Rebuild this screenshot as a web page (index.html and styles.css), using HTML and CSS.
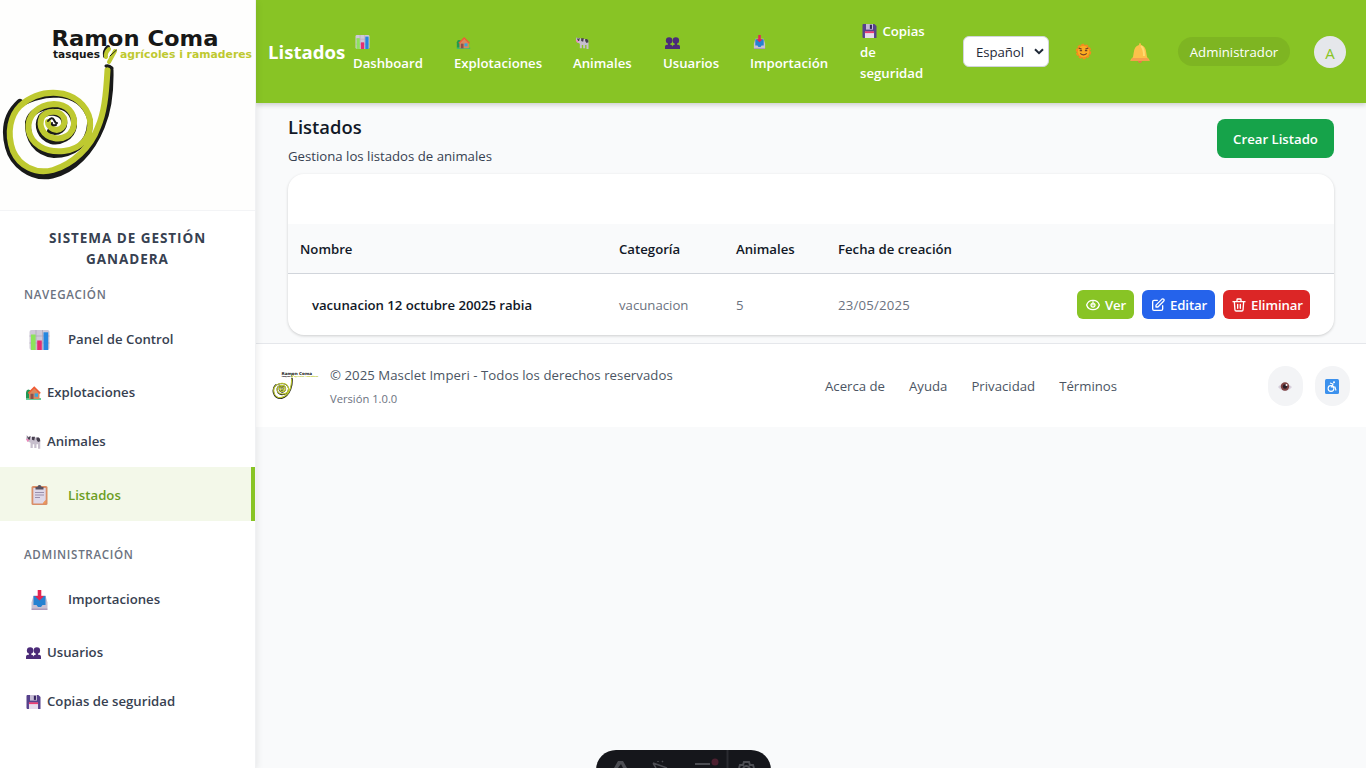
FILE: index.html
```html
<!DOCTYPE html>
<html lang="es">
<head>
<meta charset="utf-8">
<title>Listados</title>
<link rel="stylesheet" href="styles.css">
</head>
<body>
<svg class="defs" width="0" height="0" aria-hidden="true">
  <symbol id="chart" viewBox="0 0 20 20"><rect width="20" height="20" rx="2" fill="#cfc9d8"/><path d="M0 6h20M0 13h20M6.500 0v20M13 0v20" stroke="#aaa2b8" stroke-width=".7"/><rect x="1.500" y="4.500" width="4.600" height="15.500" fill="#8de35b"/><rect x="7.700" y="10.500" width="4.600" height="9.500" fill="#e52d70"/><rect x="14" y="2.300" width="4.700" height="17.700" fill="#2686df"/></symbol>
  <symbol id="house" viewBox="0 0 20 18"><path d="M0 16V8q1-5 5-3l3 2v9z" fill="#219653"/><path d="M0 16h20v2H0z" fill="#38bb75"/><path d="M4 8l7-6 7 6v9H4z" fill="#d9895f"/><path d="M3 9.500L11 1.500l8 8" fill="none" stroke="#f05b35" stroke-width="2"/><rect x="6" y="10" width="4" height="7" fill="#8c504b"/><rect x="11.500" y="9.500" width="4.500" height="4.500" fill="#36a8dc"/></symbol>
  <symbol id="cow" viewBox="0 0 20 18"><path d="M1 0l2 2 3-1 2 2h8q3 0 3 4v11h-3v-6h-2v5h-3v-5H9v5H6v-7L2 8 0 5z" fill="#c7bfcd"/><path d="M1 0l2 3 3-2-1 5H3zm7 2h4l-1 5-3-1zm6 1h3q2 1 2 5l-3 1-2-3z" fill="#463f4e"/><path d="M0 5h3l1 2-2 2z" fill="#ee86ba"/></symbol>
  <symbol id="users" viewBox="0 0 20 16"><g fill="#4b2b78"><circle cx="5.500" cy="4.500" r="4.300"/><circle cx="14.500" cy="4.500" r="4.300"/><path d="M0 16v-3q0-3 5-3t5 3q0-3 5-3t5 3v3z"/><path d="M4 7h3v4H4zM13 7h3v4h-3z"/></g></symbol>
  <symbol id="disk" viewBox="0 0 20 20"><path d="M1 0h16l3 3v17H1L0 19V1z" fill="#56418c"/><path d="M5 0h10v8H5z" fill="#c6bbd4"/><path d="M10.500 1h3v6h-3z" fill="#34245e"/><path d="M3.500 11h13v9h-13z" fill="#e7dced"/><path d="M3.500 10.500h13V13h-13z" fill="#ed3d72"/></symbol>
  <symbol id="inbox" viewBox="0 0 16 20"><path d="M2 5.500h12l2 7V18q0 2-2 2H2q-2 0-2-2v-5.500z" fill="#c8c0d2"/><path d="M2 6h12v9h-3l-1.500 2h-3L5 15H2z" fill="#2581d1"/><path d="M0 18.500h16V20H0z" fill="#ad9bbb"/><path d="M6.200 0h3.600v6h2.700L8 10.500 3.500 6h2.700z" fill="#e62552"/></symbol>
  <symbol id="clip" viewBox="0 0 16 20"><rect y="1" width="16" height="19" rx="1.500" fill="#d98e67"/><path d="M1.800 3h12.400v12l-3 3.500H1.800z" fill="#ded8e8"/><path d="M14.200 15v3.500h-3z" fill="#f39b58"/><path d="M4 4.500V2h2q0-2 2-2t2 2h2v2.500z" fill="#57505f"/><path d="M3.500 7.500h9M3.500 10h9M3.500 12.500h5" stroke="#9a8fac"/></symbol>
</svg>
<div class="app">
  <aside class="sidebar">
    <div class="brand"><svg class="logo" viewBox="0 0 256 200">
      <g id="snail" fill="none" stroke-linecap="round" stroke-linejoin="round">
        <path d="M109.500 70C110 93 107 112 101 126C91 151 73 170 52 174.500C31 179 13 163 9 147C4 128 9 113 20 103" stroke="#191a19" stroke-width="8"/>
        <path d="M15 109C26 99 43 95 57 95C75 96 86 106 90 120" stroke="#191a19" stroke-width="5"/>
        <path d="M90 124C89 144 73 155 54 155C36 153 27 139 28 122C30 112 42 106 55 106C68 106 75 115 74 126C72 138 60 143 51 141C40 137 36 126 41 117C47 110 61 112 64 120C66 129 58 134 50 131" stroke="#191a19" stroke-width="6"/>
        <path d="M107.500 70C106 97 104 113 98 127C91 147 73 164 53 170C35 175 19 165 13 151C6 132 11 115 20 106C30 97 43 92 57 93C74 94 87 105 90 120C92 137 81 149 64 151C45 153 31 144 28.500 130C27 115 38 105 54 104C67 104 75 113 74 124C73 135 63 140 54 138C43 136 38 126 42 117C48 110 60 110 64 118C66 126 60 132 53 129Q48 126 48 122" stroke="#bec930" stroke-width="6"/>
        <path d="M48 121q4-5 6-1t3 3M52 123q-1 3 4 2" stroke="#191a19" stroke-width="2"/>
        <path d="M106 66q3-1 6 2" stroke="#191a19" stroke-width="3"/>
        <path d="M105 56q-1-5 3-9" stroke="#191a19" stroke-width="4"/><path d="M106 57q-1-4 3-8M109 62l6-11" stroke="#bec930" stroke-width="4"/><path d="M110 56l6.500-6" stroke="#191a19"/>
      </g>
      <g id="wordmark" font-family="DejaVu Sans, sans-serif" font-weight="bold"><text x="51.500" y="46" font-size="21.500" textLength="167" lengthAdjust="spacingAndGlyphs" fill="#171817">Ramon Coma</text><text x="53" y="58" font-size="10.500" textLength="47" lengthAdjust="spacingAndGlyphs" fill="#171817">tasques</text><text x="120" y="58" font-size="10.500" textLength="132" lengthAdjust="spacingAndGlyphs" fill="#bec930">agrícoles i ramaderes</text></g>
    </svg></div>
    <h2 class="system">SISTEMA DE GESTIÓN<br>GANADERA</h2>
    <h3 class="section">NAVEGACIÓN</h3>
    <a class="item big"><svg><use href="#chart"/></svg><span>Panel de Control</span></a>
    <a class="item"><svg><use href="#house"/></svg><span>Explotaciones</span></a>
    <a class="item"><svg><use href="#cow"/></svg><span>Animales</span></a>
    <a class="item big active"><svg><use href="#clip"/></svg><span>Listados</span></a>
    <h3 class="section admin">ADMINISTRACIÓN</h3>
    <a class="item big"><svg><use href="#inbox"/></svg><span>Importaciones</span></a>
    <a class="item"><svg><use href="#users"/></svg><span>Usuarios</span></a>
    <a class="item"><svg><use href="#disk"/></svg><span>Copias de seguridad</span></a>
  </aside>
  <div class="content">
    <header class="topbar">
      <h1 class="title">Listados</h1>
      <nav class="topnav">
        <a><svg><use href="#chart"/></svg><br>Dashboard</a>
        <a><svg class="low"><use href="#house"/></svg><br>Explotaciones</a>
        <a><svg class="low"><use href="#cow"/></svg><br>Animales</a>
        <a><svg class="low"><use href="#users"/></svg><br>Usuarios</a>
        <a><svg><use href="#inbox"/></svg><br>Importación</a>
        <a><svg class="disk"><use href="#disk"/></svg> Copias<br>de<br>seguridad</a>
      </nav>
      <div class="language"><span>Español</span><svg viewBox="0 0 10 7"><path d="M1 1.200l4 4 4-4" fill="none" stroke="#1f2937" stroke-width="2"/></svg></div>
      <svg class="sun" viewBox="0 0 18 18"><circle cx="9" cy="9" r="7.200" fill="#f48b20" stroke="#f48b20" stroke-width="2" stroke-dasharray="3 1.500"/><circle cx="9" cy="9" r="6" fill="#faad21"/><path d="M4 5.500l3 1M14 5.500l-3 1M5 8h2.500M10.500 8H13M5.500 11q3.500 3 7 0" fill="none" stroke="#754325" stroke-width="1.300"/></svg>
      <svg class="bell" viewBox="0 0 20 20"><circle cx="10" cy="18" r="2" fill="#e6784d"/><path d="M9 2q0-2 1-2t1 2q5 1 5.500 9l.5 3 2.500 3q.5 1-1 1h-17q-1.500 0-1-1L3 14l.5-3Q4 3 9 2z" fill="#fcc14b"/><path d="M2 15h16l1.500 3H.5z" fill="#f6a04c"/><path d="M11 3q3 2 3 10" fill="none" stroke="#ffdc70" stroke-width="2"/></svg>
      <span class="role">Administrador</span><span class="avatar">A</span>
    </header>
    <main class="main">
      <div class="heading"><div><h2>Listados</h2><p>Gestiona los listados de animales</p></div><button class="create">Crear Listado</button></div>
      <section class="card">
        <div class="row head"><span>Nombre</span><span>Categoría</span><span>Animales</span><span class="date">Fecha de creación</span></div>
        <div class="row entry"><strong>vacunacion 12 octubre 20025 rabia</strong><span>vacunacion</span><span>5</span><span class="day">23/05/2025</span>
          <div class="actions">
            <button class="view"><svg viewBox="0 0 24 24"><path d="M2.500 12C3.700 7.900 7.500 5 12 5s8.300 2.900 9.500 7c-1.200 4.100-5 7-9.500 7s-8.300-2.900-9.500-7z"/><path d="M10 10a3 3 0 1 0 4 0M12 7v5"/></svg><span>Ver</span></button>
            <button class="edit"><svg viewBox="0 0 24 24"><path d="M11 5H6a2 2 0 00-2 2v11a2 2 0 002 2h11a2 2 0 002-2v-5m-1.400-9.400a2 2 0 112.800 2.800L11.800 15H9v-2.800l8.600-8.600z"/></svg><span>Editar</span></button>
            <button class="delete"><svg viewBox="0 0 24 24"><path d="M19 7l-.9 12.100A2 2 0 0116.100 21H7.900a2 2 0 01-2-1.900L5 7m5 4v6m4-6v6m1-10V4a1 1 0 00-1-1h-4a1 1 0 00-1 1v3M3 7h18"/></svg><span>Eliminar</span></button>
          </div>
        </div>
      </section>
    </main>
    <footer class="footer">
      <svg class="footlogo" viewBox="0 0 256 200"><use href="#snail"/><use href="#wordmark"/></svg>
      <div class="copyright"><p>© 2025 Masclet Imperi - Todos los derechos reservados</p><small>Versión 1.0.0</small></div>
      <nav class="footlinks"><a>Acerca de</a><a>Ayuda</a><a>Privacidad</a><a>Términos</a></nav>
      <div class="tools"><span><svg width="14" height="12" viewBox="0 0 14 12"><path d="M0 6Q6-1 14 6q-7 8-14 0z" fill="#d6cedb"/><circle cx="7" cy="5.500" r="4.200" fill="#804443"/><circle cx="7" cy="5.500" r="2.200" fill="#291e28"/><circle cx="8.500" cy="4" r="1" fill="#fff"/></svg></span><span><svg width="14" height="15" viewBox="0 0 14 15"><rect width="14" height="15" rx="1.500" fill="#3c91ed"/><g fill="none" stroke="#fff" stroke-width="1.100"><circle cx="6" cy="9.500" r="2.900"/><path d="M5 4l3 1-1.500 3H10l1 3.500"/></g><circle cx="9" cy="3.300" r="1" fill="#fff"/></svg></span></div>
    </footer>
  </div>
</div>
<div class="devbar"><svg width="175" height="18" viewBox="0 0 175 18" fill="none" stroke="#4c4d53" stroke-width="2"><path d="M18 18l4-7h5l4 7h-4l-2-4-3 4z" fill="#4c4d53" stroke="none"/><path d="M57 13l14 5M57 13l3 5M62 12l0-1M66 12l1-1" stroke-width="1.500"/><path d="M99 14h15"/><circle cx="119" cy="12" r="3.500" fill="#4c2030" stroke="none"/><path d="M131.500 0v18" stroke="#2a2b31"/><path d="M143 18l1-3 3 0 1-3h5l1 3 3 0 1 3M147 18q3-4 7 0"/></svg></div>
</body>
</html>
```
FILE: styles.css
```css
* { box-sizing: border-box; }
body { margin: 0; background: #f9fafb; color: #111827; font: 13.2px/21px "Open Sans", "Noto Sans", sans-serif; overflow: hidden; }
h1, h2, h3, p { margin: 0; }
button { border: 0; font: inherit; color: #fff; font-weight: 600; }
.defs { position: absolute; }
.app { display: flex; height: 768px; }
.sidebar { width: 256px; flex: none; background: #fff; border-right: 1px solid #f0f1f3; box-shadow: 0 2px 8px rgba(0,0,0,.1); z-index: 2; position: relative; }
.brand { height: 211px; border-bottom: 1px solid #f3f4f6; background: #fefefd; }
.logo { display: block; width: 256px; height: 200px; }
.system { padding-top: 17px; height: 74px; text-align: center; color: #374151; font-size: 13.5px; line-height: 21px; letter-spacing: .95px; }
.section { margin-left: 24px; height: 26px; line-height: 19px; font-size: 11.6px; font-weight: 600; letter-spacing: .68px; color: #6b7280; }
.admin { margin-top: 24px; }
.item { display: flex; align-items: center; height: 49px; padding-left: 26px; color: #374151; font-weight: 600; }
.item svg { width: 15px; height: 14px; margin-right: 6px; }
.item.big { height: 57px; padding-left: 29px; }
.item.big svg { width: 21px; height: 20px; margin-right: 18px; }
.item.active { height: 54px; margin-top: 1px; padding-top: 2px; background: #f3f8e9; color: #6c9e1f; border-right: 4px solid #88c425; }
.content { width: 1110px; }
.topbar { height: 103px; background: #88c425; display: flex; align-items: center; padding-left: 12px; color: #fff; box-shadow: 0 2px 5px rgba(0,0,0,.18); position: relative; }
.title { width: 85px; font-size: 18.6px; line-height: 28px; padding-top: 1px; white-space: nowrap; }
.topnav { display: grid; grid-template-columns: 101px 119px 90px 87px 110px 103px; align-items: center; font-weight: 600; white-space: nowrap; padding-top: 2px; }
.topnav svg { width: 15px; height: 14px; margin-left: 2px; vertical-align: -2px; }
.topnav .low { height: 12px; }
.topnav .disk { margin-right: 2px; }
.language { width: 86px; height: 31px; border: 1px solid #d1d5db; border-radius: 6px; background: #fff; color: #1f2937; padding: 0 4px 0 12px; display: flex; align-items: center; justify-content: space-between; }
.language span { padding-top: 2px; letter-spacing: -.05px; }
.language svg { width: 10px; height: 7px; }
.sun { width: 17px; height: 17px; margin-left: 26px; }
.bell { width: 20px; height: 20px; margin: 2px 28px 0 38px; }
.role { width: 112px; height: 29px; border-radius: 15px; background: #7eb522; text-align: center; line-height: 31px; margin-right: 24px; }
.avatar { width: 32px; height: 32px; border-radius: 50%; background: #e5e7eb; color: #88c425; text-align: center; line-height: 34px; font-size: 15px; }
.main { height: 240px; padding: 9px 32px 0; }
.heading { display: flex; justify-content: space-between; height: 62px; }
.heading h2 { font-size: 18.4px; font-weight: 600; line-height: 30px; }
.heading p { color: #374151; padding-top: 4px; }
.create { width: 117px; height: 39px; margin-top: 7px; border-radius: 8px; background: #16a34a; padding: 2px 0 0; }
.card { height: 161px; border-radius: 16px; background: #fff; padding-top: 50px; box-shadow: 0 1px 3px rgba(0,0,0,.18); }
.row { display: grid; grid-template-columns: 319px 117px 102px 130px 1fr; align-items: center; padding: 0 24px 0 12px; }
.row > span, .row > strong { padding-top: 2px; }
.head { height: 50px; background: #f9fafb; border-bottom: 1px solid #d1d5db; font-weight: 600; }
.date { white-space: nowrap; }
.day { letter-spacing: .2px; }
.entry { height: 61px; color: #6b7280; }
.entry strong { padding-left: 12px; color: #111827; font-weight: 600; letter-spacing: -.04px; }
.actions { display: flex; gap: 8px; justify-content: flex-end; }
.actions button { height: 29px; border-radius: 6px; padding: 0 0 0 8px; display: flex; align-items: center; }
.actions span { padding-top: 2px; letter-spacing: -.1px; }
.actions svg { width: 16px; height: 16px; margin-right: 4px; flex: none; fill: none; stroke: #fff; stroke-width: 2; stroke-linecap: round; stroke-linejoin: round; }
.view { width: 57px; background: #88c425; }
.edit { width: 73px; background: #2563eb; }
.delete { width: 87px; background: #dc2626; }
.footer { height: 84px; border-top: 1px solid #e5e7eb; background: #fff; display: flex; align-items: center; padding: 0 16px; color: #4b5563; }
.footlogo { width: 47px; height: 37px; margin: 0 11px 2px 0; }
.copyright { width: 495px; }
.copyright small { display: block; font-size: 11.2px; line-height: 19px; padding-top: 3px; color: #6b7280; }
.copyright p { padding-top: 2px; letter-spacing: .05px; }
.footlinks { display: flex; gap: 24px; padding-top: 2px; }
.tools { display: flex; gap: 12px; margin-left: auto; }
.tools span { width: 35px; height: 40px; border-radius: 20px; background: #f3f4f6; display: flex; align-items: center; justify-content: center; padding: 2px 2px 0 0; }
.devbar { position: fixed; left: 596px; top: 750px; width: 175px; height: 40px; border-radius: 22px; background: #15161b; }
.devbar svg { display: block; }
```
